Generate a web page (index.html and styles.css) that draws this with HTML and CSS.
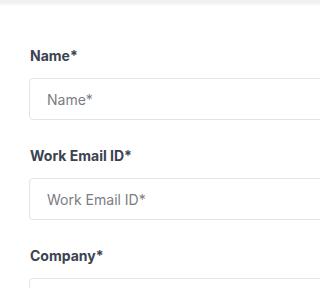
FILE: index.html
```html
<!DOCTYPE html>
<html>
<head>
<meta charset="utf-8">
<link rel="stylesheet" href="styles.css">
</head>
<body>
<div class="page">
  <div class="topbar"></div>
  <form class="form">
    <div class="field">
      <label class="label">Name*</label>
      <input class="input" type="text" placeholder="Name*">
    </div>
    <div class="field">
      <label class="label">Work Email ID*</label>
      <input class="input" type="text" placeholder="Work Email ID*">
    </div>
    <div class="field">
      <label class="label">Company*</label>
      <input class="input" type="text" placeholder="Company*">
    </div>
  </form>
</div>
</body>
</html>
```
FILE: styles.css
```css
html, body {
  margin: 0;
  padding: 0;
  background: #ffffff;
}
body {
  font-family: "Inter", "Liberation Sans", sans-serif;
}
.page {
  width: 100%;
  height: 100vh;
  overflow: hidden;
}
.topbar {
  height: 4px;
  background: #f1f1f3;
  box-shadow: 0 1px 3px rgba(0,0,0,0.04);
}
.form {
  padding: 43px 0 0 29px;
  display: flex;
  flex-direction: column;
  gap: 27px;
}
.field {
  display: flex;
  flex-direction: column;
  gap: 13px;
}
.label {
  font-size: 14px;
  font-weight: 700;
  color: #3b4350;
  line-height: 18px;
  padding-left: 1px;
}
.input {
  box-sizing: border-box;
  width: 100vw;
  height: 42px;
  border: 1px solid #e3e4e6;
  border-radius: 4px;
  padding: 0 0 0 17px;
  font-family: inherit;
  font-size: 14px;
  color: #333;
  outline: none;
  background: #fff;
}
.input::placeholder {
  color: #7a7d82;
}
```
